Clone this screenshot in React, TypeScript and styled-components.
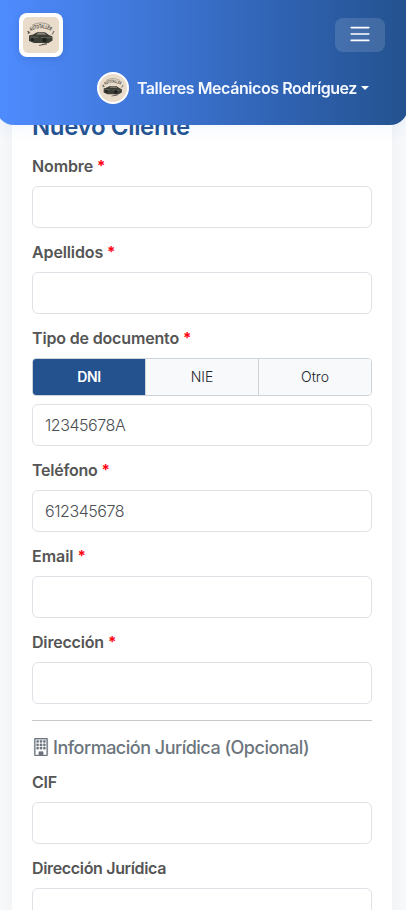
import React from "react";
import styled, { createGlobalStyle } from "styled-components";
import { BsBuilding } from "react-icons/bs";

const GlobalStyle = createGlobalStyle`
  *, *::before, *::after { box-sizing: border-box; }
  body {
    margin: 0;
    background: #f8fafc;
    font-family: Inter, "Liberation Sans", sans-serif;
    font-size: 16px;
    line-height: 1.5;
    color: #212529;
  }
`;

const Page = styled.div`
  height: 910px;
  overflow: hidden;
  padding: 92px 14px 0 12px;
`;

const Header = styled.header`
  position: fixed;
  inset: 0 -2px auto -4px;
  z-index: 10;
  height: 125px;
  padding: 13px 23px 0;
  border-radius: 0 0 18px 18px;
  background: linear-gradient(90deg, #4f8cff 0%, #2f62b1 70%, #24528f 100%);
  box-shadow: 0 4px 16px rgba(79, 140, 255, 0.08);
`;

const TopRow = styled.div`
  display: flex;
  align-items: center;
  justify-content: space-between;
  height: 44px;
`;

const Brand = styled.div`
  width: 44px;
  height: 44px;
  padding: 4px;
  border-radius: 8px;
  background: #fff;
  box-shadow: 0 2px 8px rgba(0, 0, 0, 0.1);

  svg { display: block; border-radius: 5px; }
`;

const MenuButton = styled.button`
  display: flex;
  align-items: center;
  justify-content: center;
  width: 50px;
  height: 34px;
  padding: 0 0 2px;
  border: 0;
  border-radius: 8px;
  background: rgba(255, 255, 255, 0.13);
`;

const AccountRow = styled.div`
  display: flex;
  align-items: center;
  justify-content: flex-end;
  height: 32px;
  margin-top: 15px;
  padding-right: 16px;
  color: #f4f8ff;
  font-weight: 600;
  white-space: nowrap;
`;

const Avatar = styled.div`
  width: 32px;
  height: 32px;
  margin-right: 8px;
  padding: 2px;
  border-radius: 50%;
  background: #fff;

  svg { display: block; border-radius: 50%; }
`;

const Caret = styled.span`
  margin-left: 4px;
  border-top: 4px solid #fff;
  border-left: 4px solid transparent;
  border-right: 4px solid transparent;
`;

const Fit = styled.span<{ $spacing: number }>`
  letter-spacing: ${(p) => p.$spacing}px;
`;

const Card = styled.main`
  height: 900px;
  padding: 20px;
  background: #fff;
  box-shadow: 0 0 24px rgba(0, 0, 0, 0.05);
`;

const Title = styled.h1`
  margin: 0 0 13px;
  font-size: 24px;
  font-weight: 600;
  line-height: 29px;
  color: #24528f;
`;

const Field = styled.div`
  margin-bottom: 12px;
`;

const Label = styled.label`
  display: flex;
  height: 24px;
  margin-bottom: 8px;
  font-weight: 600;
  color: #555;
  white-space: nowrap;
`;

const Required = styled.span`
  margin-left: 4px;
  font-size: 15px;
  line-height: 23px;
  font-weight: 700;
  color: #ff0010;
`;

const Input = styled.input`
  display: block;
  width: 100%;
  height: 42px;
  padding: 0 12px;
  border: 1px solid #dee2e6;
  border-radius: 6px;
  background: #fff;
  font: inherit;
  font-weight: 300;
  letter-spacing: -0.45px;
  outline: none;

  &::placeholder { color: #4c5054; opacity: 1; }
`;

const Segments = styled.div`
  display: grid;
  grid-template-columns: 112px 1fr 1fr;
  height: 38px;
  margin-bottom: 8px;
  overflow: hidden;
  border: 1px solid #ced2d9;
  border-radius: 4px;
`;

const Segment = styled.button<{ $active?: boolean }>`
  padding: 0 0 2px;
  border: 0;
  border-left: ${(p) => (p.$active ? "0" : "1px solid #ced2d9")};
  background: ${(p) => (p.$active ? "#24528f" : "#f8f9fb")};
  color: ${(p) => (p.$active ? "#fff" : "#212529")};
  font: ${(p) => (p.$active ? 600 : 300)} 14px Inter, sans-serif;
  letter-spacing: ${(p) => (p.$active ? -0.35 : 0)}px;
`;

const Divider = styled.hr`
  height: 1px;
  margin: 16px 0;
  border: 0;
  background: #c8c9ca;
`;

const SectionTitle = styled.h2`
  display: flex;
  align-items: center;
  gap: 3px;
  height: 21px;
  margin: 0 0 12px;
  font-size: 18px;
  font-weight: 500;
  line-height: 21px;
  color: #6c757d;
  white-space: nowrap;

  svg { margin-bottom: 2px; stroke: currentColor; stroke-width: 0.25; }
`;

function WorkshopLogo({ size, id }: { size: number; id: string }) {
  return (
    <svg width={size} height={size} viewBox="0 0 36 36">
      <rect width="36" height="36" fill="#eadccb" />
      <path id={id} d="M7.8 14.2 Q18 8.2 28.2 14.2" fill="none" />
      <text fontFamily="Liberation Sans" fontWeight="700" fontSize="5.6" fill="#3c3c36">
        <textPath href={`#${id}`} textLength="21" lengthAdjust="spacingAndGlyphs">AUTOTALLER</textPath>
      </text>
      <path d="M9 8.3 Q18 3.4 27 8.3" fill="none" stroke="#77746a" strokeWidth=".6" />
      <path d="M4.3 14.5l3 1.6M5.8 14l-.6 3M31 14l-1.8 3.5" stroke="#494a43" strokeWidth=".9" />
      <path d="M6 18.5l4-1 4-2.2h8l4 2.7 3.5 1.5v4l-4 2.4H11l-5-2z" fill="#3b3e37" />
      <path d="M13 17.4l2-1.2h6.5l2 1.4z" fill="#a39b8c" />
      <path d="M7 20.2h8M18 20.7h11" stroke="#847f70" strokeWidth=".6" />
      <circle cx="21.5" cy="23" r="2.3" fill="#1d211e" />
      <circle cx="9.5" cy="22.5" r="1.5" fill="#1d211e" />
      <path d="M16 28.4l4-.7 4-1.2M19 27.4l5-.5" stroke="#4c4d45" strokeWidth=".8" />
    </svg>
  );
}

interface TextFieldProps {
  label: string;
  spacing: number;
  required?: boolean;
  placeholder?: string;
  children?: React.ReactNode;
}

function TextField({ label, spacing, required, placeholder, children }: TextFieldProps) {
  return (
    <Field>
      <Label>
        <Fit $spacing={spacing}>{label}</Fit>
        {required && <Required>*</Required>}
      </Label>
      {children}
      <Input placeholder={placeholder} aria-label={label} />
    </Field>
  );
}

export default function App() {
  return (
    <>
      <GlobalStyle />
      <Header>
        <TopRow>
          <Brand><WorkshopLogo size={36} id="brand-arc" /></Brand>
          <MenuButton aria-label="Menú">
            <svg width="24" height="24" viewBox="0 0 30 30" fill="none" stroke="#fff" strokeWidth="2" strokeLinecap="round">
              <path d="M4 7h22M4 15h22M4 23h22" />
            </svg>
          </MenuButton>
        </TopRow>
        <AccountRow>
          <Avatar><WorkshopLogo size={28} id="avatar-arc" /></Avatar>
          <Fit $spacing={-0.43}>Talleres Mecánicos Rodríguez</Fit>
          <Caret />
        </AccountRow>
      </Header>
      <Page>
        <Card>
          <Title><Fit $spacing={-0.35}>Nuevo Cliente</Fit></Title>
          <TextField label="Nombre" spacing={-0.12} required />
          <TextField label="Apellidos" spacing={-0.12} required />
          <TextField label="Tipo de documento" spacing={-0.16} required placeholder="12345678A">
            <Segments>
              <Segment $active>DNI</Segment>
              <Segment>NIE</Segment>
              <Segment>Otro</Segment>
            </Segments>
          </TextField>
          <TextField label="Teléfono" spacing={-0.25} required placeholder="612345678" />
          <TextField label="Email" spacing={-0.05} required />
          <TextField label="Dirección" spacing={-0.18} required />
          <Divider />
          <SectionTitle>
            <BsBuilding size={18} />
            <Fit $spacing={-0.5}>Información Jurídica (Opcional)</Fit>
          </SectionTitle>
          <TextField label="CIF" spacing={-0.2} />
          <TextField label="Dirección Jurídica" spacing={-0.34} />
        </Card>
      </Page>
    </>
  );
}
